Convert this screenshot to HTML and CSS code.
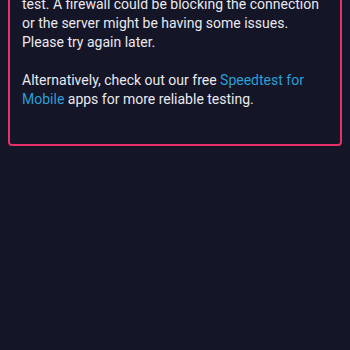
FILE: index.html
```html
<!DOCTYPE html>
<html lang="en">
<head>
<meta charset="utf-8">
<link rel="stylesheet" href="styles.css">
</head>
<body>
<div class="error-box">
<p class="msg">We were unable to connect to a Speedtest server<br>to check your connection and complete your<br>test. A firewall could be blocking the connection<br>or the server might be having some issues.<br>Please try again later.</p>
<p class="msg">Alternatively, check out our free <a class="link" href="#">Speedtest for Mobile</a> apps for more reliable testing.</p>
</div>
</body>
</html>
```
FILE: styles.css
```css
html, body {
  margin: 0;
  padding: 0;
  background: #141526;
  height: 100%;
  overflow: hidden;
}
body {
  font-family: Roboto, "Liberation Sans", sans-serif;
  color: #e8e8ee;
  padding: 0 8px;
}
.error-box {
  margin-top: -61px;
  border: 2px solid #e5306a;
  border-radius: 4px;
  padding: 16px 12px 35px;
}
.msg {
  margin: 0 0 19px;
  font-size: 14px;
  line-height: 19px;
}
.msg:last-child {
  margin-bottom: 0;
}
.link {
  color: #2a9fd6;
  text-decoration: none;
}
```
